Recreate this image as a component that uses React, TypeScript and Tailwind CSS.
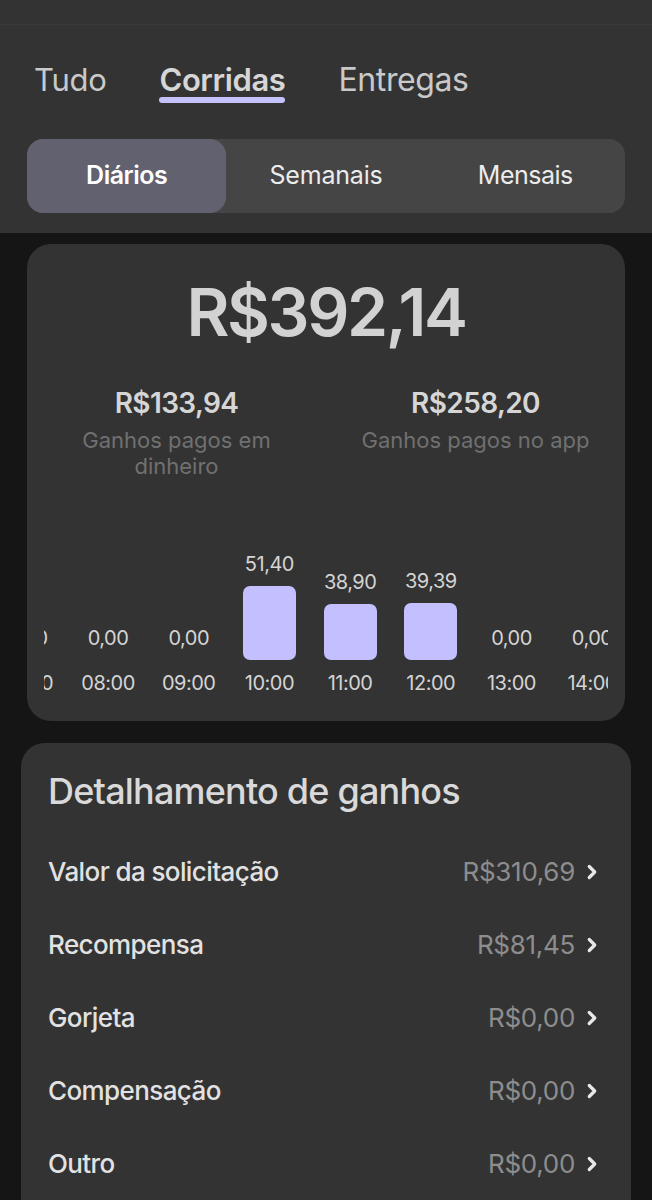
import React from 'react';
import { ChevronRight } from 'lucide-react';

const hours = [
  { time: '07:00', value: 0 },
  { time: '08:00', value: 0 },
  { time: '09:00', value: 0 },
  { time: '10:00', value: 51.4 },
  { time: '11:00', value: 38.9 },
  { time: '12:00', value: 39.39 },
  { time: '13:00', value: 0 },
  { time: '14:00', value: 0 },
  { time: '15:00', value: 0 },
];

const breakdown = [
  { label: 'Valor da solicitação', value: 'R$310,69' },
  { label: 'Recompensa', value: 'R$81,45' },
  { label: 'Gorjeta', value: 'R$0,00' },
  { label: 'Compensação', value: 'R$0,00' },
  { label: 'Outro', value: 'R$0,00' },
];

const fmt = (v: number) => v.toFixed(2).replace('.', ',');

export default function App() {
  return (
    <div className="min-h-[1200px] bg-[#151515] font-['Inter',sans-serif] overflow-hidden">
      {/* Header */}
      <div className="bg-[#333333]">
        <div className="h-[25px] border-b border-[#3a3a3a]" />
        <div className="flex items-start gap-[53px] pl-[34px] pt-[35px] h-[114px]">
          <span className="text-[31px] leading-[40px] text-[#c9c9c9] tracking-[-0.3px]">Tudo</span>
          <div className="flex flex-col">
            <span className="text-[31px] leading-[40px] font-semibold text-[#d6d6d6] tracking-[-0.4px]">Corridas</span>
            <div className="h-[6px] rounded-full bg-[#c5c1fb] mt-[-3px]" />
          </div>
          <span className="text-[32px] leading-[40px] text-[#c9c9c9] tracking-[-0.4px]">Entregas</span>
        </div>
        <div className="px-[27px] pb-[20px]">
          <div className="grid grid-cols-3 h-[74px] rounded-[16px] bg-[#454545]">
            <div className="flex items-center justify-center rounded-[16px] bg-[#62616f] text-[25px] font-semibold text-white tracking-[-0.5px]">Diários</div>
            <div className="flex items-center justify-center text-[25px] text-[#ececec] tracking-[-0.2px]">Semanais</div>
            <div className="flex items-center justify-center text-[25px] text-[#ececec] tracking-[-0.5px]">Mensais</div>
          </div>
        </div>
      </div>

      {/* Summary card */}
      <div className="mx-[27px] mt-[11px] rounded-[24px] bg-[#333333] pt-[35px] pb-[28px]">
        <div className="text-center text-[66px] leading-none font-semibold text-[#d2d2d2] tracking-[-2.4px]">R$392,14</div>
        <div className="grid grid-cols-2 mt-[44px]">
          <div className="flex flex-col items-center">
            <span className="text-[28px] leading-none font-semibold text-[#d6d6d6] tracking-[-0.6px]">R$133,94</span>
            <span className="mt-[10px] text-center text-[22px] leading-[26px] text-[#707070] w-[200px]">Ganhos pagos em dinheiro</span>
          </div>
          <div className="flex flex-col items-center">
            <span className="text-[28px] leading-none font-semibold text-[#d6d6d6] tracking-[-0.6px]">R$258,20</span>
            <span className="mt-[10px] text-center text-[22px] leading-[26px] text-[#707070]">Ganhos pagos no app</span>
          </div>
        </div>

        {/* Hourly chart */}
        <div className="mx-[17px] mt-[75px] overflow-hidden">
          <div className="flex items-end ml-[-57px]">
            {hours.map((h) => (
              <div key={h.time} className="w-[80.7px] shrink-0 flex flex-col items-center">
                <span className="text-[20px] leading-none text-[#d4d4d4] tracking-[-0.5px]">{fmt(h.value)}</span>
                <div
                  className="mt-[12px] w-[53px] rounded-[7px] bg-[#c4c0ff]"
                  style={{ height: Math.round(h.value * 1.44) }}
                />
                <span className="mt-[13px] text-[20px] leading-none text-[#d4d4d4] tracking-[-0.5px]">{h.time}</span>
              </div>
            ))}
          </div>
        </div>
      </div>

      {/* Breakdown card */}
      <div className="mx-[21px] mt-[22px] rounded-t-[24px] bg-[#333333] pl-[27px] pr-[28px] pt-[26px] pb-[20px]">
        <div className="text-[36px] leading-[44px] font-medium text-[#d9d9d9] tracking-[-0.8px]">Detalhamento de ganhos</div>
        <div className="mt-[22px]">
          {breakdown.map((r) => (
            <div key={r.label} className="flex items-center justify-between h-[73px]">
              <span className="text-[26px] font-medium text-[#e2e2e2] tracking-[-0.6px]">{r.label}</span>
              <div className="flex items-center gap-[6px]">
                <span className="text-[26px] text-[#8d8d8d] tracking-[-0.3px]">{r.value}</span>
                <ChevronRight className="w-[22px] h-[22px] text-[#e8e8e8]" strokeWidth={3.5} />
              </div>
            </div>
          ))}
        </div>
      </div>
    </div>
  );
}
